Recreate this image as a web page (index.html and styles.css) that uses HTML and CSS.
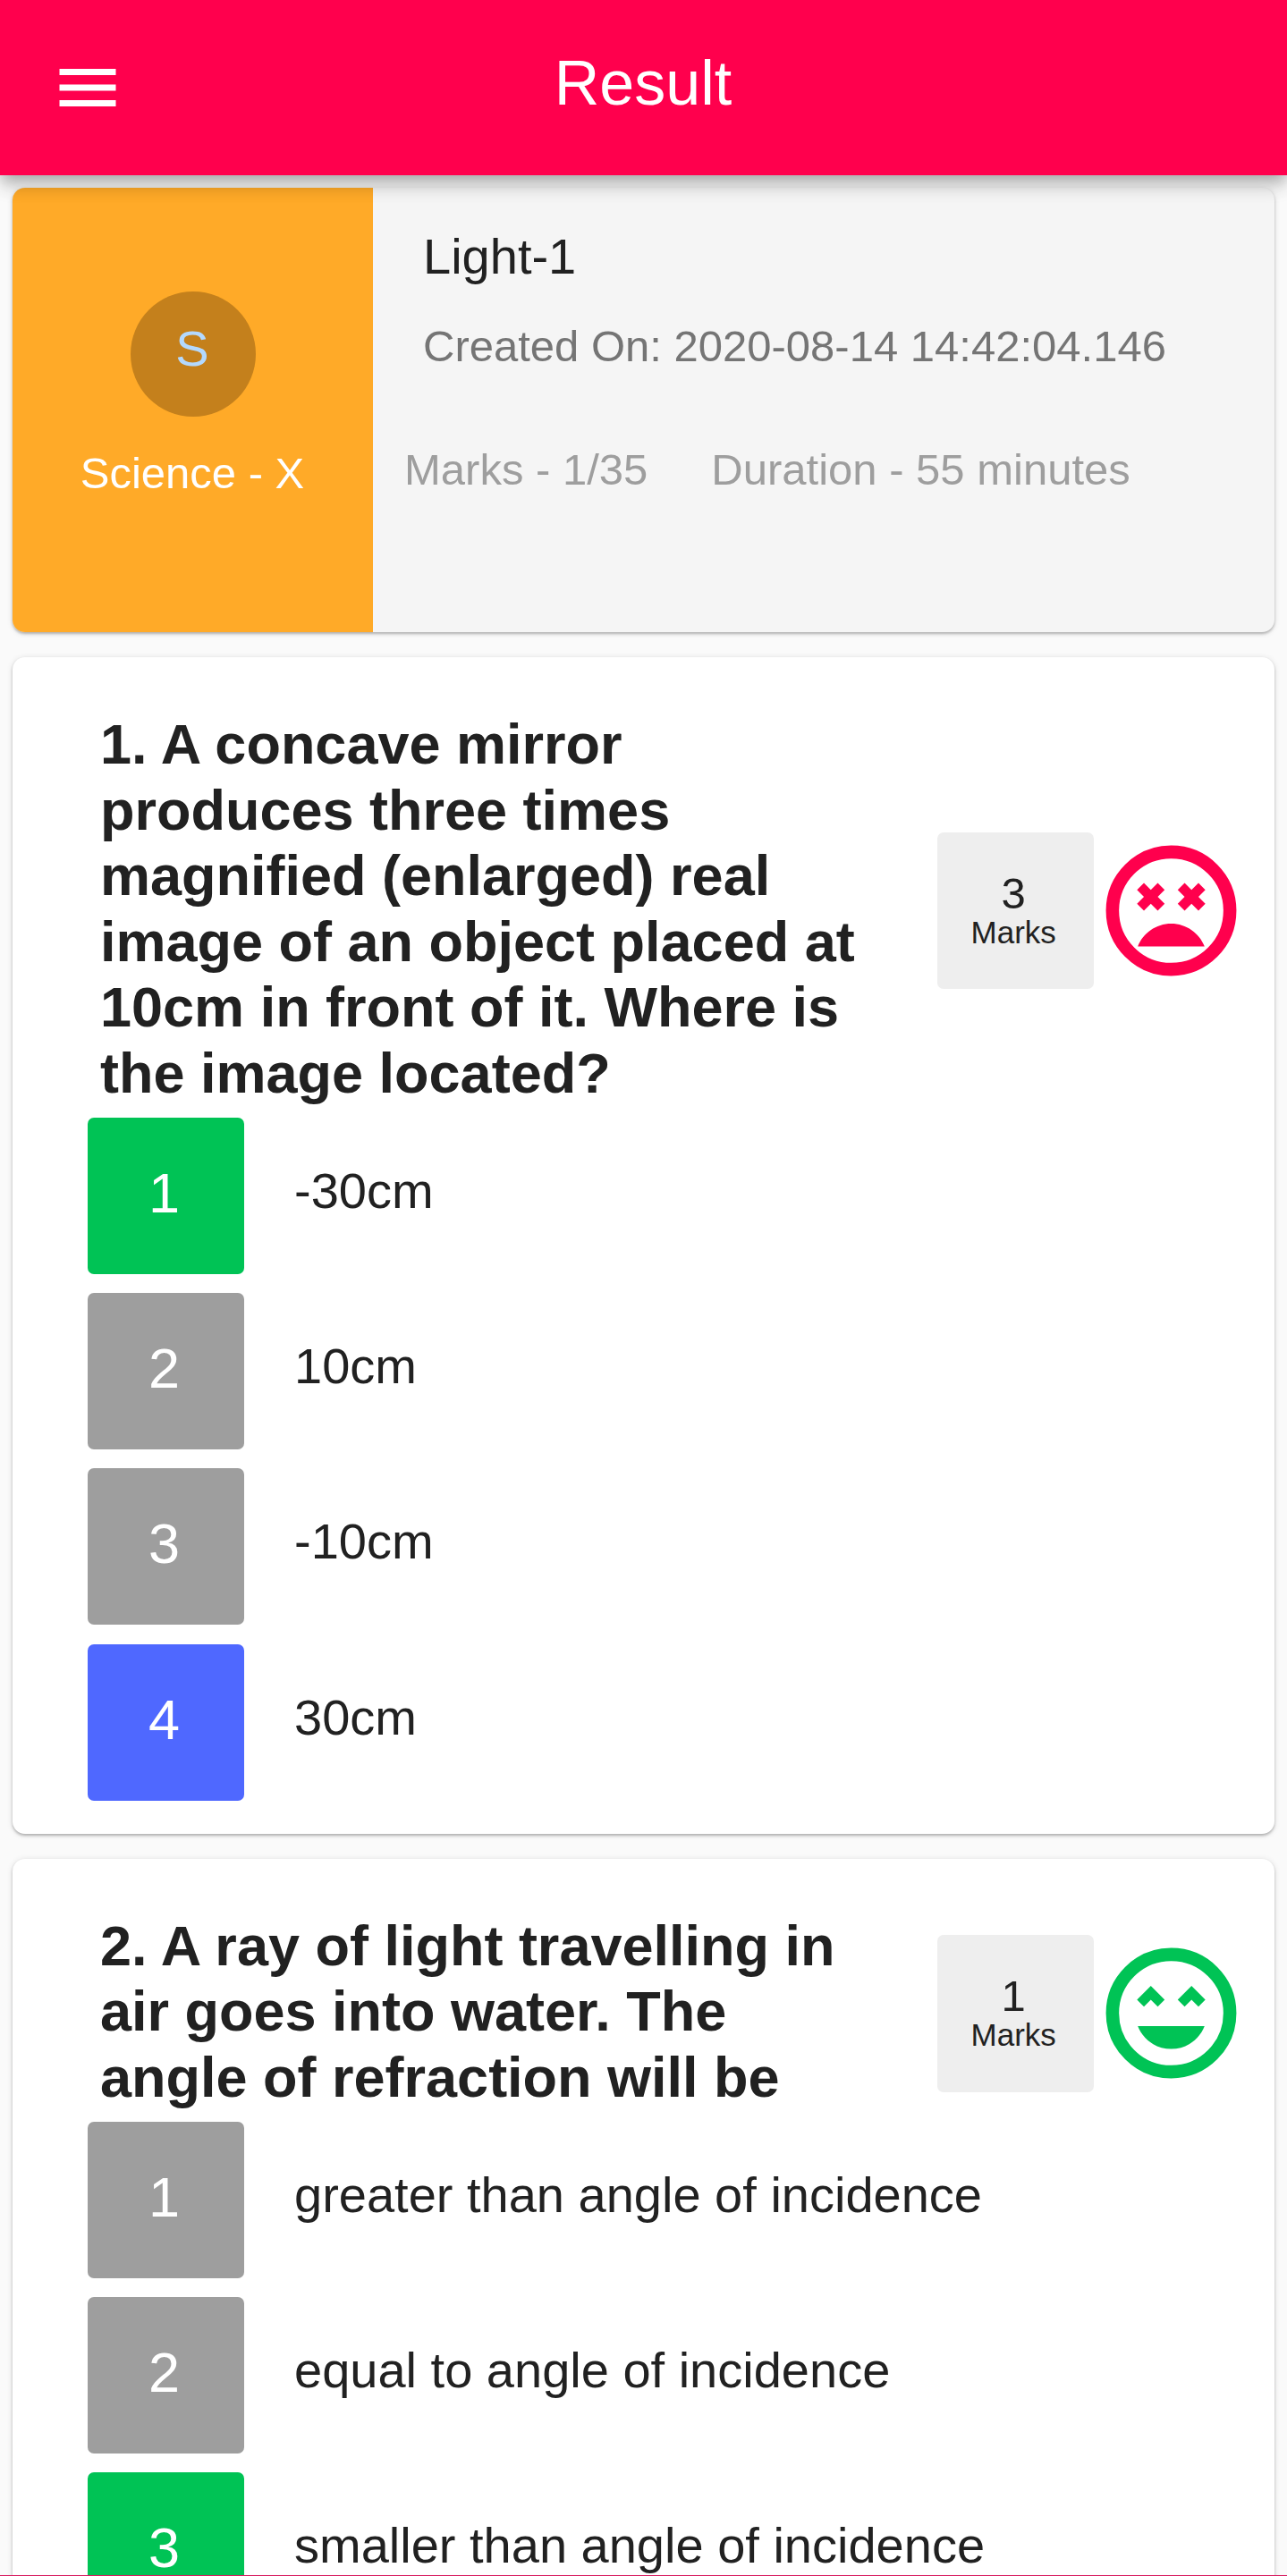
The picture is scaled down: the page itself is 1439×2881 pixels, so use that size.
FILE: index.html
```html
<!DOCTYPE html>
<html lang="en">
<head>
<meta charset="utf-8">
<title>Result</title>
<link rel="stylesheet" href="styles.css">
</head>
<body>
<header class="app-bar">
  <svg class="menu-icon" viewBox="0 0 24 24" aria-label="Menu"><path d="M3 18h18v-2H3v2zm0-5h18v-2H3v2zm0-7v2h18V6H3z"/></svg>
  <h1 class="title">Result</h1>
</header>
<main class="content">
  <section class="card summary">
    <div class="subject">
      <div class="avatar">S</div>
      <div class="subject-name">Science - X</div>
    </div>
    <div class="details">
      <h2 class="test-name">Light-1</h2>
      <p class="created">Created On: 2020-08-14 14:42:04.146</p>
      <div class="stats"><span>Marks - 1/35</span><span>Duration - 55 minutes</span></div>
    </div>
  </section>

  <section class="card question">
    <div class="question-head">
      <h3 class="question-text">1. A concave mirror produces three times magnified (enlarged) real image of an object placed at 10cm in front of it. Where is the image located?</h3>
      <div class="marks"><span class="marks-value">3</span><span class="marks-label">Marks</span></div>
      <svg class="face wrong" viewBox="0 0 24 24"><circle class="ring" cx="12" cy="12" r="9"/><path d="M12 14c-2.33 0-4.32 1.45-5.12 3.5h10.24c-.8-2.05-2.79-3.5-5.12-3.5z"/><path id="cross" d="M7.82 12l1.06-1.06L9.94 12 11 10.94 9.94 9.88 11 8.82 9.94 7.76 8.88 8.82 7.82 7.76 6.76 8.82 7.82 9.88 6.76 10.94z"/><use href="#cross" x="6.24"/></svg>
    </div>
    <ol class="options">
      <li class="option"><span class="key correct">1</span><span class="answer">-30cm</span></li>
      <li class="option"><span class="key">2</span><span class="answer">10cm</span></li>
      <li class="option"><span class="key">3</span><span class="answer">-10cm</span></li>
      <li class="option"><span class="key chosen">4</span><span class="answer">30cm</span></li>
    </ol>
  </section>

  <section class="card question">
    <div class="question-head">
      <h3 class="question-text">2. A ray of light travelling in air goes into water. The angle of refraction will be</h3>
      <div class="marks"><span class="marks-value">1</span><span class="marks-label">Marks</span></div>
      <svg class="face right" viewBox="0 0 24 24"><circle class="ring" cx="12" cy="12" r="9"/><path d="M12 17.5c2.33 0 4.32-1.45 5.12-3.5H6.88c.8 2.05 2.79 3.5 5.12 3.5z"/><path d="M8.88 9.94L9.94 11 11 9.94 8.88 7.82 6.76 9.94 7.82 11zM15.12 9.94L16.18 11l1.06-1.06-2.12-2.12L13 9.94 14.06 11z"/></svg>
    </div>
    <ol class="options">
      <li class="option"><span class="key">1</span><span class="answer">greater than angle of incidence</span></li>
      <li class="option"><span class="key">2</span><span class="answer">equal to angle of incidence</span></li>
      <li class="option"><span class="key correct">3</span><span class="answer">smaller than angle of incidence</span></li>
    </ol>
  </section>
</main>
</body>
</html>
```

FILE: styles.css
```css
* { box-sizing: border-box; }

html, body { height: 100%; }

body {
  margin: 0;
  height: 2881px;
  overflow: hidden;
  display: flex;
  flex-direction: column;
  border-bottom: 1px solid #d81b60;
  background: #fafafa;
  color: #212121;
  font-family: "Liberation Sans", Arial, sans-serif;
}

h1, h2, h3, p, ol { margin: 0; padding: 0; font-weight: 400; }

.app-bar {
  position: relative;
  z-index: 1;
  flex: none;
  height: 196px;
  padding: 53px 57px 0 56px;
  display: grid;
  grid-template-columns: 84px 1fr 84px;
  align-items: start;
  background: #ff004d;
  color: #fff;
  box-shadow: 0 7px 14px -3.5px rgba(0, 0, 0, .2), 0 14px 17.5px 0 rgba(0, 0, 0, .14), 0 3.5px 35px 0 rgba(0, 0, 0, .06);
}

.menu-icon { width: 84px; height: 84px; margin-top: 3px; fill: #fff; }

.title { font-size: 70px; line-height: 80px; text-align: center; }

.content {
  flex: 1;
  min-height: 0;
  overflow: hidden;
  padding: 14px;
  display: flex;
  flex-direction: column;
  gap: 28px;
}

.card {
  flex: none;
  border-radius: 14px;
  background: #fff;
  box-shadow: 0 2px 3px rgba(0, 0, 0, .24), 0 1px 7px rgba(0, 0, 0, .12);
}

.summary { display: flex; height: 497px; background: #f5f5f5; }

.subject {
  width: 403px;
  padding-top: 116px;
  display: flex;
  flex-direction: column;
  align-items: center;
  border-radius: 14px 0 0 14px;
  background: #ffaa28;
  color: #fff;
}

.avatar {
  width: 140px;
  height: 140px;
  border-radius: 50%;
  padding: 32px 1px 0 0;
  background: #c4801c;
  color: #b3d9ff;
  font-size: 56px;
  line-height: 64px;
  text-align: center;
}

.subject-name { margin-top: 35px; padding-right: 1px; font-size: 49px; line-height: 56px; }

.details { padding: 45px 0 0 35px; }

.test-name { padding-left: 21px; font-size: 56px; line-height: 64px; }

.created {
  margin-top: 40px;
  padding-left: 21px;
  color: #757575;
  font-size: 49px;
  line-height: 56px;
}

.stats {
  margin-top: 82px;
  display: flex;
  gap: 71px;
  color: #9e9e9e;
  font-size: 49px;
  line-height: 56px;
}

.question { padding: 61px 28px 37px 84px; }

.question-head { display: flex; align-items: center; }

.question-text {
  width: 949.5px;
  padding: 0 90px 2px 14px;
  font-size: 63px;
  font-weight: 700;
  line-height: 73.5px;
}

.marks {
  width: 175.4px;
  height: 175.4px;
  margin-top: 2px;
  padding: 43px 4px 0 0;
  border-radius: 7px;
  display: flex;
  flex-direction: column;
  align-items: center;
  background: #eee;
}

.marks-value { font-size: 49px; line-height: 50px; }

.marks-label { font-size: 35px; line-height: 38px; }

.face { width: 175px; height: 175px; margin: 2px 0 0 -1.2px; fill: currentColor; }

.face.wrong { color: #ff004d; }

.face.right { color: #00c355; }

.ring { fill: none; stroke: currentColor; stroke-width: 2; }

.options {
  margin-top: 11px;
  list-style: none;
  display: flex;
  flex-direction: column;
  gap: 21.2px;
}

.option { display: flex; gap: 56px; }

.key {
  width: 175px;
  height: 175px;
  padding: 47px 4px 0 0;
  border-radius: 7px;
  background: #9e9e9e;
  color: #fff;
  font-size: 63px;
  line-height: 74px;
  text-align: center;
}

.key.correct { background: #00c355; }

.key.chosen { background: #4f68ff; }

.answer { padding-top: 50px; font-size: 56px; line-height: 64px; }
```
